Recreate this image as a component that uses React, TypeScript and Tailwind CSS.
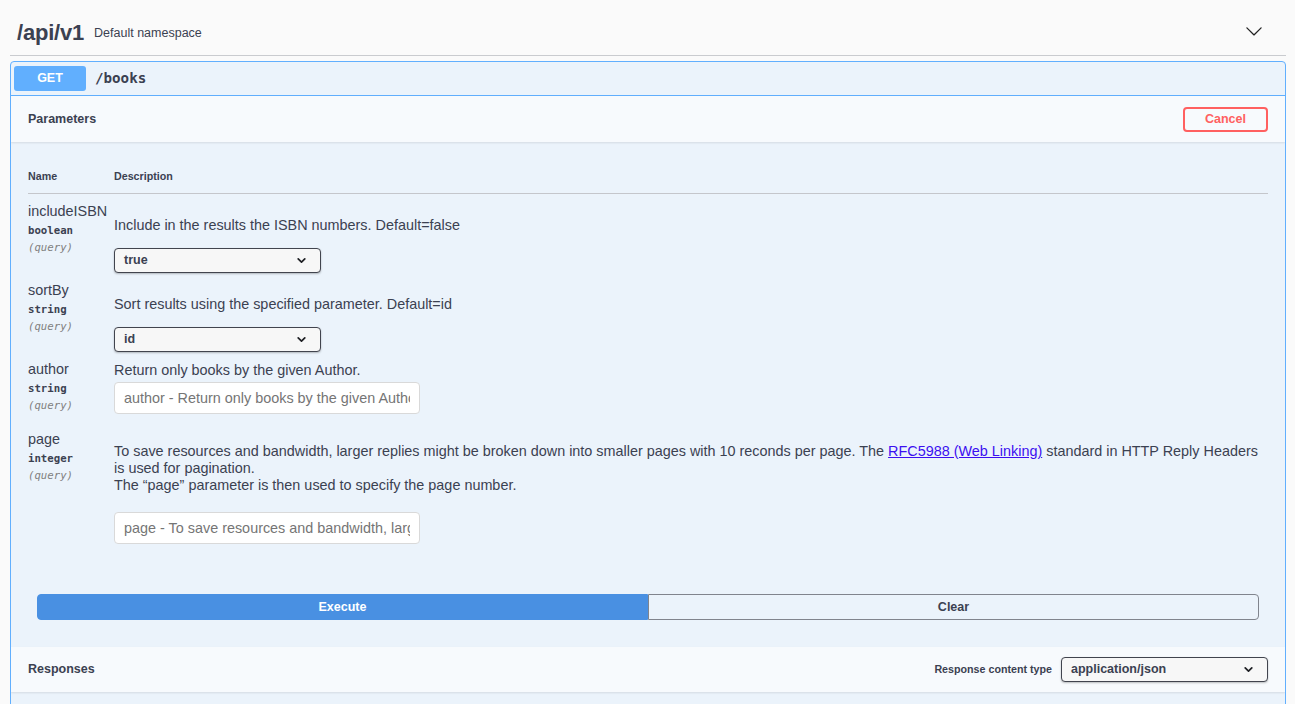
import React from "react";

const Chevron = ({ className = "" }: { className?: string }) => (
  <svg viewBox="0 0 10 10" className={className} fill="none">
    <polyline points="2,3.6 5,6.4 8,3.6" stroke="#1f2024" strokeWidth="1.6" strokeLinecap="round" strokeLinejoin="round" />
  </svg>
);

const Select = ({ value, className = "" }: { value: string; className?: string }) => (
  <div
    className={`flex items-center justify-between w-[207px] h-[25px] border border-[#41444e] rounded-[4px] bg-[#f7f7f7] shadow-[0_1px_2px_rgba(0,0,0,0.25)] pl-[9px] pr-[13px] ${className}`}
  >
    <span className="text-[12.5px] font-bold text-[#3b4151] leading-none">{value}</span>
    <Chevron className="w-[11px] h-[11px]" />
  </div>
);

const Input = ({ placeholder, className = "" }: { placeholder: string; className?: string }) => (
  <input
    readOnly
    placeholder={placeholder}
    className={`block w-[306px] h-[32px] border border-[#d9d9d9] rounded-[4px] bg-white px-[9px] text-[14.4px] text-[#3b4151] placeholder:text-[#757575] outline-none font-['Liberation_Sans',Arial,sans-serif] ${className}`}
  />
);

const NameCell = ({ name, type }: { name: string; type: string }) => (
  <div className="w-[86px] shrink-0">
    <div className="text-[14.4px] leading-[20px] text-[#3b4151]">{name}</div>
    <div className="mt-[3px] text-[10.7px] leading-[14px] font-bold font-['DejaVu_Sans_Mono',monospace] text-[#3b4151]">{type}</div>
    <div className="mt-[3px] text-[10.7px] leading-[14px] italic font-['DejaVu_Sans_Mono',monospace] text-[#808080]">(query)</div>
  </div>
);

export default function App() {
  return (
    <div className="min-h-screen bg-[#fafafa] pl-[10px] pr-[9px] font-['Liberation_Sans',Arial,sans-serif] text-[#3b4151]">
      {/* Tag header */}
      <div className="h-[56px] border-b border-[#c9cbcf] flex items-center pt-[11px] pl-[7px]">
        <span className="text-[22px] font-bold leading-none tracking-[-0.2px]">/api/v1</span>
        <span className="ml-[10px] text-[12.5px] leading-none">Default namespace</span>
        <svg viewBox="0 0 20 20" className="ml-auto mr-[23px] -mt-[4px] w-[18px] h-[18px]" fill="#222">
          <path d="M17.418 6.109c.272-.268.709-.268.979 0s.271.701 0 .969l-7.908 7.83c-.27.268-.707.268-.979 0l-7.908-7.83c-.27-.268-.27-.701 0-.969.271-.268.709-.268.979 0L10 13.25l7.418-7.141z" />
        </svg>
      </div>

      {/* Opblock */}
      <div className="mt-[5px] border border-[#61affe] rounded-[4px] bg-[#ebf3fb] overflow-hidden">
        {/* Summary */}
        <div className="h-[34px] flex items-center px-[3px] border-b border-[#61affe]">
          <div className="w-[72px] h-[25px] rounded-[3px] bg-[#61affe] text-white font-bold text-[12.5px] flex items-center justify-center">
            GET
          </div>
          <span className="ml-[9px] font-['DejaVu_Sans_Mono',monospace] font-bold text-[14.2px] text-[#3b4151]">/books</span>
        </div>

        {/* Parameters header */}
        <div className="h-[46px] bg-[#f7fafd] shadow-[0_1px_2px_rgba(0,0,0,0.1)] flex items-center justify-between px-[17px]">
          <span className="font-bold text-[12.5px]">Parameters</span>
          <button className="w-[85px] h-[25px] border-2 border-[#ff6060] rounded-[4px] text-[#ff6060] font-bold text-[12.5px] flex items-center justify-center">
            Cancel
          </button>
        </div>

        {/* Parameters table */}
        <div className="px-[17px] pt-[26px]">
          <div className="flex pb-[9px] border-b border-[#c4c6cb] text-[10.7px] leading-[16px] font-bold">
            <div className="w-[86px] shrink-0">Name</div>
            <div>Description</div>
          </div>

          {/* includeISBN */}
          <div className="flex pt-[7px]">
            <NameCell name="includeISBN" type="boolean" />
            <div className="flex-1">
              <div className="mt-[16px] text-[14.4px] leading-[17px]">Include in the results the ISBN numbers. Default=false</div>
              <Select value="true" className="mt-[14px]" />
            </div>
          </div>

          {/* sortBy */}
          <div className="flex pt-[7px]">
            <NameCell name="sortBy" type="string" />
            <div className="flex-1">
              <div className="mt-[16px] text-[14.4px] leading-[17px]">Sort results using the specified parameter. Default=id</div>
              <Select value="id" className="mt-[14px]" />
            </div>
          </div>

          {/* author */}
          <div className="flex pt-[7px] pb-[8px]">
            <NameCell name="author" type="string" />
            <div className="flex-1">
              <div className="mt-[3px] text-[14.4px] leading-[17px]">Return only books by the given Author.</div>
              <Input placeholder="author - Return only books by the given Author" className="mt-[3px]" />
            </div>
          </div>

          {/* page */}
          <div className="flex pt-[7px]">
            <NameCell name="page" type="integer" />
            <div className="flex-1">
              <div className="mt-[14px] text-[14.4px] leading-[17px]">
                <span className="whitespace-nowrap">
                  To save resources and bandwidth, larger replies might be broken down into smaller pages with 10 reconds per page. The{" "}
                  <a href="#" className="text-[#3b0ff0] underline">RFC5988 (Web Linking)</a> standard in HTTP Reply Headers
                </span>
                <br />
                is used for pagination.
                <br />
                The “page” parameter is then used to specify the page number.
              </div>
              <Input placeholder="page - To save resources and bandwidth, larger replies might be broken down" className="mt-[18px]" />
            </div>
          </div>
        </div>

        {/* Execute / Clear */}
        <div className="mt-[50px] px-[26px] flex">
          <button className="flex-1 h-[26px] bg-[#4990e2] border border-[#4990e2] rounded-l-[4px] text-white font-bold text-[12.5px] flex items-center justify-center">
            Execute
          </button>
          <button className="flex-1 h-[26px] border border-[#80848d] rounded-r-[4px] text-[#3b4151] font-bold text-[12.5px] flex items-center justify-center">
            Clear
          </button>
        </div>

        {/* Responses header */}
        <div className="mt-[27px] h-[45px] bg-[#f7fafd] shadow-[0_1px_2px_rgba(0,0,0,0.1)] flex items-center justify-between px-[17px]">
          <span className="font-bold text-[12.5px]">Responses</span>
          <div className="flex items-center">
            <span className="font-bold text-[10.7px] mr-[9px]">Response content type</span>
            <Select value="application/json" />
          </div>
        </div>
        <div className="h-[40px]" />
      </div>
    </div>
  );
}
